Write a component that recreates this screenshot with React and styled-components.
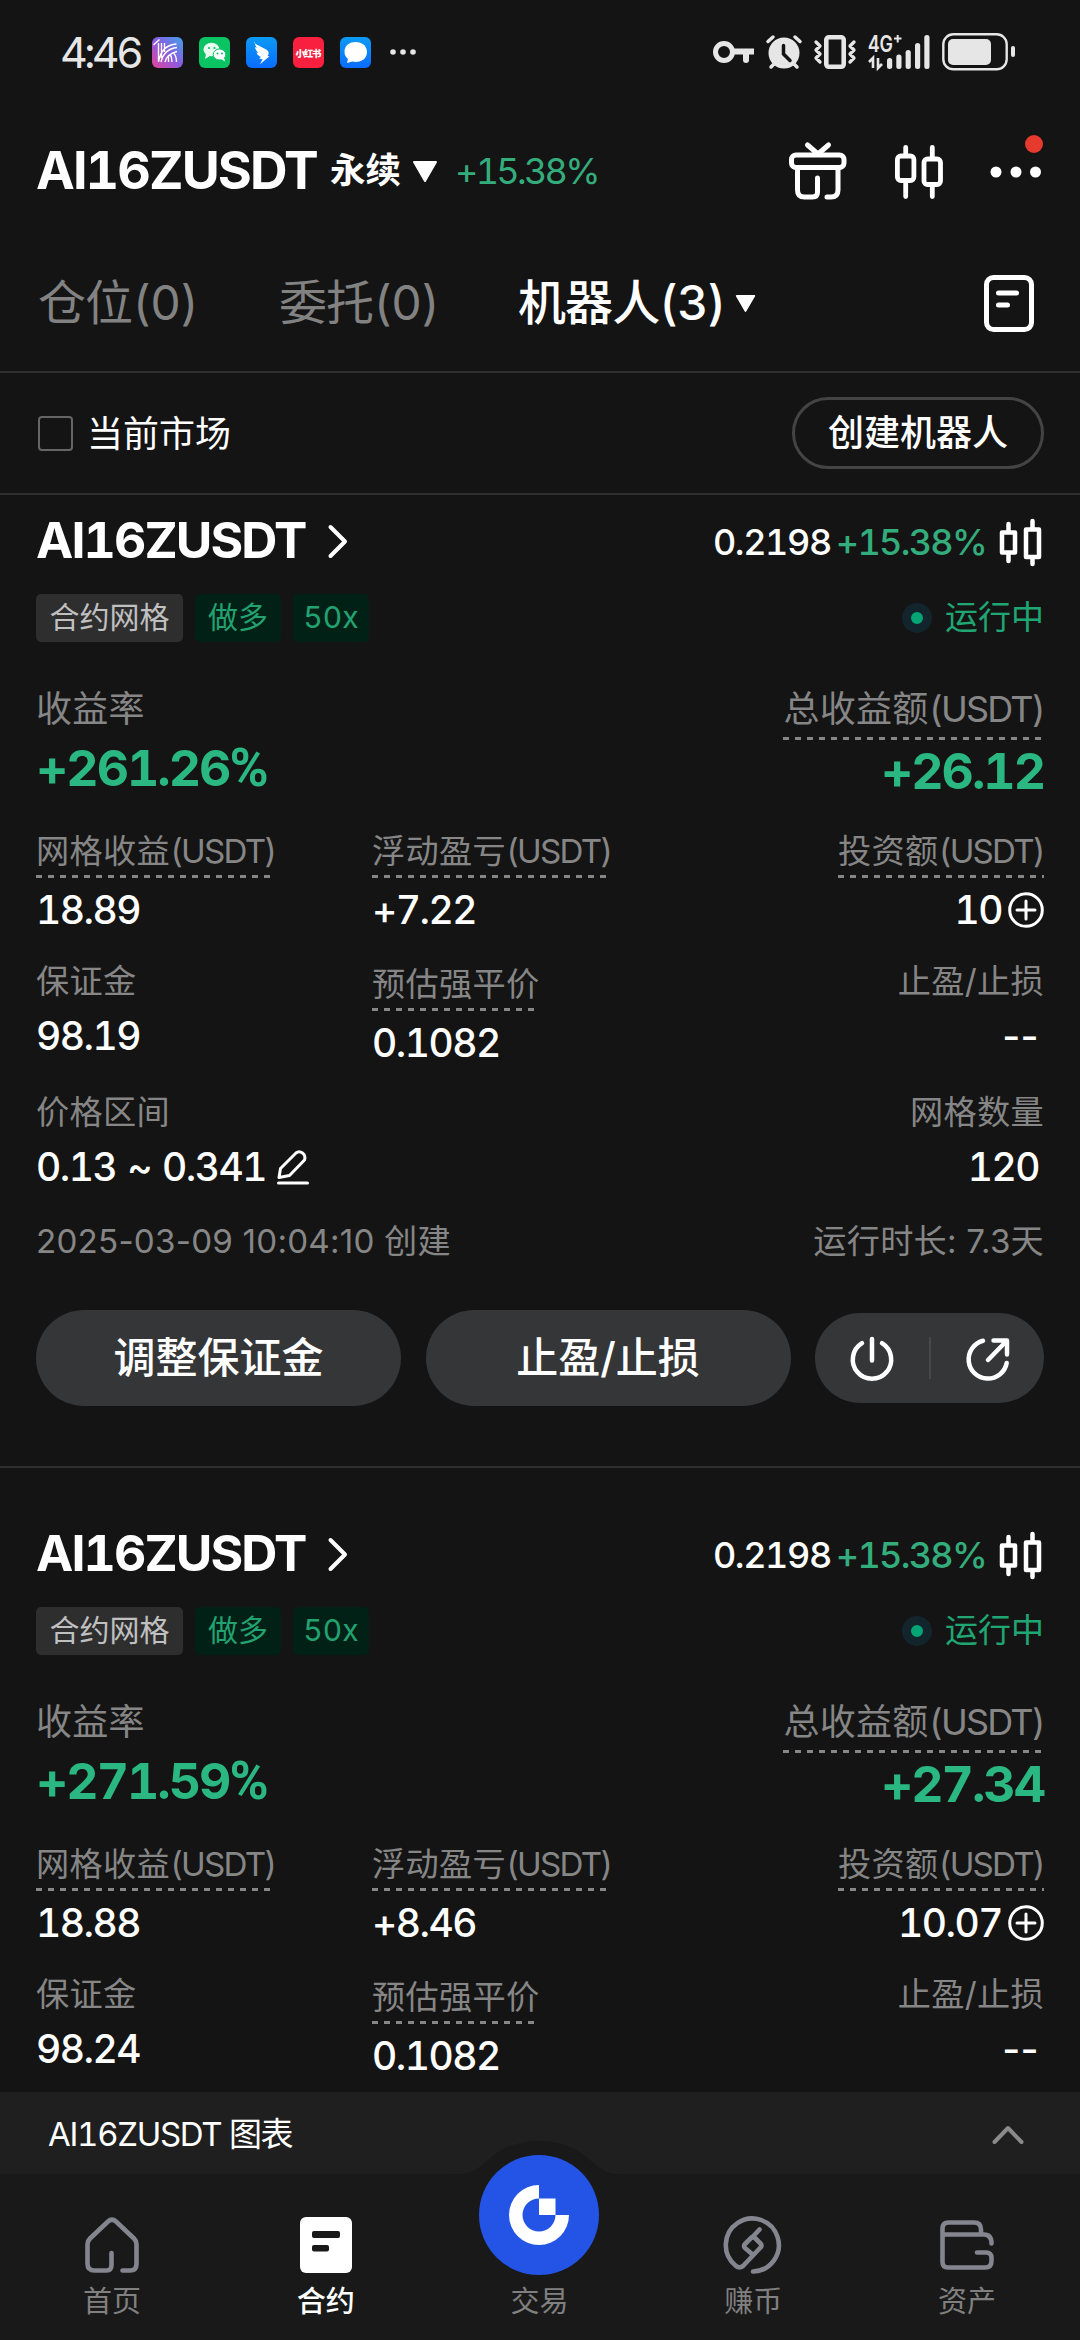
import React from 'react'
import styled, {createGlobalStyle, css} from 'styled-components'

const Black = '#141414'
const Green = '#2ab781'
const SoftGreen = '#34ad7c'
const Gray = '#868686'
const Line = '#2e2e30'
const NavGray = '#84858f'

const GlobalStyle = createGlobalStyle`
html, body {
  margin: 0;
  background: ${Black};
}
* {
  box-sizing: border-box;
}
svg {
  display: block;
  flex: none;
  overflow: visible;
}
`
const Screen = styled.div`
width: 1080px;
height: 2340px;
display: flex;
flex-direction: column;
overflow: hidden;
background: ${Black};
color: #fff;
font-family: 'Inter', 'Noto Sans CJK SC', sans-serif;
font-variant-numeric: tabular-nums;
line-height: 1.2;
white-space: nowrap;
`

/* status bar */
const StatusBar = styled.div`
height: 106px;
display: flex;
align-items: center;
justify-content: space-between;
padding: 0 65px 2px 60px;
color: #e6e6e6;
`
const StatusSide = styled.div`
display: flex;
align-items: center;
gap: ${props => props.gap}px;
`
const Clock = styled.div`
width: 76px;
font-size: 43px;
line-height: 50px;
letter-spacing: -3.8px;
`

/* header */
const Header = styled.div`
height: 130px;
display: flex;
align-items: center;
padding: 1px 36px 0;
`
const Pair = styled.div`
width: 294px;
font-size: 52px;
font-weight: 700;
letter-spacing: -1.9px;
`
const Perpetual = styled.div`
width: 82px;
font-size: 35.5px;
font-weight: 600;
`
const HeaderChange = styled.div`
margin-left: 17px;
flex: 1;
font-size: 36px;
color: ${SoftGreen};
letter-spacing: -2.7px;
`
const HeaderIcons = styled.div`
display: flex;
align-items: center;
gap: 47.5px;
`
const More = styled.div`
position: relative;
width: 52px;
margin-right: 2px;
`
const RedDot = styled.div`
position: absolute;
top: -31px;
right: -1px;
width: 18px;
height: 18px;
border-radius: 50%;
background: #e63a2e;
`

/* tabs */
const Tabs = styled.div`
height: 137px;
display: flex;
align-items: center;
padding: 0 46px 0 38px;
border-bottom: 2px solid ${Line};
`
const Tab = styled.div`
width: ${props => props.w}px;
padding-bottom: 2px;
font-size: 48px;
letter-spacing: -0.9px;
color: #828282;
${props => props.active && css`
color: #fff;
font-weight: 500;
`}
`
const Spacer = styled.div`
flex: 1;
`

/* filter row */
const Filter = styled.div`
height: 122px;
display: flex;
align-items: center;
justify-content: space-between;
padding: 0 36px 0 38px;
border-bottom: 2px solid ${Line};
`
const CheckLabel = styled.div`
display: flex;
align-items: center;
gap: 14px;
font-size: 36px;
line-height: 40px;
`
const CheckText = styled.span`
padding-top: 2px;
`
const CheckBox = styled.div`
width: 35px;
height: 35px;
border: 2px solid #666;
border-radius: 4px;
`
const CreateButton = styled.div`
width: 252px;
height: 72px;
display: flex;
align-items: center;
justify-content: center;
border: 3px solid #444;
border-radius: 36px;
padding-top: 2px;
font-size: 36px;
font-weight: 500;
`

/* robot cards */
const List = styled.div`
flex: 1;
min-height: 0;
overflow: hidden;
`
const Card = styled.div`
padding: ${props => props.first ? '10px' : '50px'} 36px 60px;
border-bottom: 2px solid ${Line};
`
const Row = styled.div`
display: flex;
align-items: center;
justify-content: space-between;
`
const TitleRow = styled(Row)`
height: 70px;
`
const Title = styled.div`
display: flex;
align-items: center;
font-size: 50px;
font-weight: 700;
letter-spacing: -1.9px;
`
const TitleText = styled.div`
width: 291px;
`
const Price = styled.div`
display: flex;
align-items: center;
font-size: 36px;
font-weight: 500;
letter-spacing: -1.4px;
padding: 5px 2px 0 0;
`
const Change = styled.span`
margin: 0 13px 0 5px;
letter-spacing: -1.7px;
color: ${SoftGreen};
`
const TagRow = styled(Row)`
height: 48px;
margin-top: 19px;
`
const Tags = styled.div`
display: flex;
gap: 12px;
`
const Tag = styled.div`
width: ${props => props.w}px;
height: 48px;
line-height: 47px;
text-align: center;
border-radius: 5px;
font-size: 30px;
background: ${props => props.green ? '#022116' : '#2e2e2f'};
color: ${props => props.green ? '#22a271' : '#c0c0c0'};
`
const Running = styled.div`
display: flex;
align-items: center;
gap: 13px;
font-size: 33px;
color: #1fa673;
`
const Pulse = styled.div`
width: 30px;
height: 30px;
border: 9px solid #13252c;
border-radius: 50%;
background: #05a474;
`
const Summary = styled.div`
height: 139px;
margin-top: 47px;
display: flex;
justify-content: space-between;
`
const Cell = styled.div`
display: flex;
flex-direction: column;
align-items: ${props => props.right ? 'flex-end' : 'flex-start'};
`
const Label = styled.div`
font-size: ${props => props.big ? 36 : 33.2}px;
line-height: 40px;
letter-spacing: 0.3px;
color: ${Gray};
margin-bottom: ${props => props.big ? 11 : 10}px;
${props => props.dashed && css`
margin-bottom: ${props.big ? 3 : 7}px;
padding-top: ${props.big ? 0 : 3}px;
&::after {
  content: '';
  display: block;
  height: 3px;
  margin-top: ${props.big ? 8 : 4}px;
  background: repeating-linear-gradient(90deg, ${Gray} 0 6px, transparent 6px 12px);
}
`}
`
const Unit = styled.span`
letter-spacing: -1.8px;
`
const BigValue = styled.div`
font-size: 50px;
line-height: 56px;
font-weight: 700;
letter-spacing: -2px;
color: ${Green};
`
const Percent = styled.span`
font-family: Roboto, sans-serif;
font-size: 53px;
line-height: 1;
`
const Grid = styled.div`
display: grid;
grid-template-columns: repeat(3, 336px);
grid-template-rows: 133px 131px 130px;
`
const Value = styled.div`
display: flex;
align-items: center;
font-size: 39px;
line-height: 50px;
font-weight: 500;
letter-spacing: -1.5px;
word-spacing: 2px;
padding-right: ${props => props.inset ? 5 : 0}px;
${props => props.empty && css`
font-variant-numeric: normal;
letter-spacing: 0.4px;
`}
`
const Gap = styled.div`
padding-left: ${props => props.w}px;
`
const Created = styled(Row)`
height: 40px;
font-size: 33.2px;
font-variant-numeric: normal;
letter-spacing: 0.2px;
color: ${Gray};
`
const Actions = styled(Row)`
margin-top: 48px;
`
const Action = styled.div`
width: 365px;
height: 96px;
border-radius: 48px;
background: #353638;
display: flex;
align-items: center;
justify-content: center;
font-size: 42px;
font-weight: 500;
`
const IconAction = styled(Action)`
width: 229px;
height: 90px;
gap: 35px;
`
const Split = styled.div`
width: 2px;
height: 42px;
background: #47484a;
`

/* bottom */
const ChartBar = styled.div`
height: 82px;
padding: 4px 56px 0 48px;
display: flex;
align-items: center;
justify-content: space-between;
background: #1f1f1f;
font-size: 33px;
letter-spacing: -1.3px;
`
const Nav = styled.div`
height: 166px;
padding: 0 6px 0 5px;
display: grid;
grid-template-columns: repeat(5, 1fr);
grid-template-rows: 166px;
background: #191919;
position: relative;
`
const Bump = styled.svg`
position: absolute;
left: 449px;
top: -33px;
`
const NavItem = styled.div`
position: relative;
display: flex;
flex-direction: column;
align-items: center;
justify-content: flex-end;
padding-bottom: 18px;
font-size: 29px;
line-height: 40px;
color: ${props => props.active ? '#fff' : '#808080'};
font-weight: ${props => props.active ? 500 : 400};
`
const NavIcon = styled.div`
height: 60px;
margin-bottom: 7px;
display: flex;
align-items: center;
`
const TradeIcon = styled.div`
margin-bottom: 7px;
`

const Candles = ({small}) => (
  small ? (
    <svg width="43" height="47" viewBox="0 0 43 47" fill="none" stroke="#fff" strokeWidth="4.5" strokeLinecap="round" strokeLinejoin="round">
      <path d="M3 13.500h13v20h-13zM27 10.500h13v27.500h-13zM9.500 5v8M9.500 34v8M33.500 2v8M33.500 38v7" />
    </svg>
  ) : (
    <svg width="48" height="54" viewBox="0 0 48 54" fill="none" stroke="#fff" strokeWidth="4.800" strokeLinecap="round">
      <rect x="2.400" y="11" width="16.500" height="24.500" rx="3.500" />
      <rect x="29" y="14" width="16.500" height="25.500" rx="3.500" />
      <path d="M10.700 2.500v8M10.700 36v15.500M37.300 2.500v11M37.300 40v11.500" />
    </svg>
  )
)

const Triangle = ({w, h}) => (
  <svg width={w} height={h} viewBox="0 0 26 21">
    <path d="M2 1h22L13 20z" fill="#fff" stroke="#fff" strokeWidth="2" strokeLinejoin="round" />
  </svg>
)

const AppIcons = () => (
  <svg width="266" height="31" viewBox="0 0 266 31">
    <defs>
      <linearGradient id="k" x1="0" y1="1" x2="1" y2="0">
        <stop offset="0" stopColor="#e8439a" />
        <stop offset=".5" stopColor="#8a5be0" />
        <stop offset="1" stopColor="#3fa5ea" />
      </linearGradient>
      <linearGradient id="b" x1="0" y1="0" x2="0" y2="1">
        <stop offset="0" stopColor="#0b9bf5" />
        <stop offset="1" stopColor="#0a6cff" />
      </linearGradient>
    </defs>
    <rect width="31" height="31" rx="6" fill="url(#k)" />
    <g fill="none" stroke="#fff" strokeWidth="1.400">
      <path d="M6.500 6v19M9.500 6v15M12.500 6v9M6.500 25q3-17 18-18M9 25q3-13 16-14.500M13 25q2-8 12-10.500M16.500 25q0-6 0-6M20 25q0-5-2-8M24.500 25q0-6-3-9" />
      <path d="M1.500 8l6-5.500" />
    </g>
    <rect x="47" width="31" height="31" rx="6" fill="#0ac463" />
    <ellipse cx="59.500" cy="12.500" rx="8" ry="6.800" fill="#e9fbef" />
    <path d="M54 17l-1 5 5-3z" fill="#e9fbef" />
    <ellipse cx="67.500" cy="17.500" rx="6.300" ry="5.500" fill="#fff" stroke="#0ac463" strokeWidth="1" />
    <path d="M69 22l4 2.500-1-4z" fill="#fff" />
    <g fill="#0ac463">
      <circle cx="57" cy="11" r="1.100" />
      <circle cx="62.500" cy="11" r="1.100" />
      <circle cx="65.500" cy="16.500" r="1" />
      <circle cx="70" cy="16.500" r="1" />
    </g>
    <rect x="94" width="31" height="31" rx="6" fill="url(#b)" />
    <path d="M102 5c2 4 13 6 14.500 10 .6 2-.5 3-1 4l2 .2-9.500 8 2.500-5-3.500-.6 2-1.500c-2-.8-4-2.500-4.500-4.500l2 .5c-2-2-3.500-4-3.500-6l2 1c-1.500-2-2.500-4-2-6z" fill="#fff" />
    <rect x="141" width="31" height="31" rx="6" fill="#f8203e" />
    <text x="143.500" y="19.500" fontSize="9.500" fontWeight="900" fill="#fff" textLength="26" fontFamily="'Noto Sans CJK SC', sans-serif">小红书</text>
    <rect x="188" width="31" height="31" rx="6" fill="url(#b)" />
    <path d="M203.500 5c7 0 11.500 4.300 11.500 10s-4.500 10-11.500 10c-1.200 0-2-.1-3-.4L195 26l1-4c-2-1.600-3.500-4-3.500-7 0-5.700 4-10 11-10z" fill="#fff" />
    <g fill="#e6e6e6">
      <circle cx="241" cy="15" r="2.800" />
      <circle cx="251" cy="15" r="2.800" />
      <circle cx="261" cy="15" r="2.800" />
    </g>
  </svg>
)

const KeyIcon = () => (
  <svg width="41" height="24" viewBox="0 0 41 24" fill="none" stroke="#e6e6e6">
    <circle cx="11" cy="12" r="8.500" strokeWidth="5" />
    <path d="M20 11.500h21" strokeWidth="6" />
    <path d="M33 12v8" strokeWidth="6" strokeLinecap="round" />
  </svg>
)

const AlarmIcon = () => (
  <svg width="36" height="34" viewBox="0 0 36 34" fill="none" strokeLinecap="round">
    <circle cx="18" cy="18" r="15.500" fill="#e6e6e6" />
    <path d="M2 6.500L7 2M34 6.500L29 2M8 29l-3 3M28 29l3 3" stroke="#e6e6e6" strokeWidth="3.500" />
    <path d="M17.500 10.500v8.500l6.500 6.500" stroke={Black} strokeWidth="3.500" />
  </svg>
)

const VibrateIcon = () => (
  <svg width="42" height="34" viewBox="0 0 42 34" fill="none" stroke="#e6e6e6">
    <rect x="12.300" y="2.300" width="17.400" height="29.500" rx="2.500" strokeWidth="4.600" />
    <path d="M2 7l4 4-4 4 4 4-4 4 4 4M40 7l-4 4 4 4-4 4 4 4-4 4" strokeWidth="3.300" strokeLinecap="round" strokeLinejoin="round" />
  </svg>
)

const SignalIcon = () => (
  <svg width="62" height="46" viewBox="0 -5 62 46" fill="#e6e6e6">
    <text x="0" y="17.500" fontSize="23" fontWeight="600" textLength="25" lengthAdjust="spacingAndGlyphs" fontFamily="Inter, sans-serif">4G</text>
    <path d="M26 4.500h7.500M29.700 1v7.500" stroke="#e6e6e6" strokeWidth="2" />
    <path d="M1 28l4-4v10M10 24v10l4-4" fill="none" stroke="#e6e6e6" strokeWidth="2.600" />
    <rect x="19" y="24" width="5.200" height="11" rx="2.500" />
    <rect x="28.300" y="20.500" width="5.200" height="14.500" rx="2.500" />
    <rect x="37.600" y="16" width="5.200" height="19" rx="2.500" />
    <rect x="47" y="9" width="5.200" height="26" rx="2.500" />
    <rect x="56.300" y="1" width="5.200" height="34" rx="2.500" />
  </svg>
)

const BatteryIcon = () => (
  <svg width="73" height="38" viewBox="0 0 73 38">
    <rect x="1.300" y="1.300" width="63.400" height="35" rx="10" fill="none" stroke="#e6e6e6" strokeWidth="2.400" />
    <rect x="6" y="6" width="43" height="26" rx="5" fill="#e6e6e6" />
    <rect x="69" y="13" width="4" height="11" rx="2" fill="#e6e6e6" />
  </svg>
)

const GiftIcon = () => (
  <svg width="58" height="60" viewBox="0 0 58 60" fill="none" stroke="#fff" strokeWidth="5" strokeLinecap="round" strokeLinejoin="round">
    <rect x="2.500" y="13" width="52.500" height="12.500" rx="4.500" />
    <path d="M18.500 3l10.500 9 10.500-9" />
    <path d="M8.500 26v22q0 7 7 7h8q5 0 5-5V36M49 26v22q0 7-7 7h-4" />
  </svg>
)

const DocIcon = () => (
  <svg width="50" height="57" viewBox="0 0 50 57" fill="none" stroke="#fff" strokeWidth="5" strokeLinecap="round">
    <rect x="2.500" y="2.500" width="45" height="52" rx="7" />
    <path d="M14.500 18h18M14.500 30h9" />
  </svg>
)

const PencilIcon = () => (
  <svg width="32" height="35" viewBox="0 0 32 35" fill="none" stroke="#fff" strokeWidth="3" strokeLinecap="round" strokeLinejoin="round">
    <path d="M2 27.500L3.500 18.500 19 3q3-2.500 6.500 0t2 7L12.500 25.500z" />
    <path d="M1.500 33h29" />
  </svg>
)

const PlusIcon = () => (
  <svg width="36" height="36" viewBox="0 0 36 36" fill="none" stroke="#fff" strokeWidth="3">
    <circle cx="18" cy="18" r="16.300" />
    <path d="M9 18h18M18 9v18" strokeLinecap="round" />
  </svg>
)

const PowerIcon = () => (
  <svg width="44" height="44" viewBox="0 0 44 44" fill="none" stroke="#fff" strokeWidth="4.500" strokeLinecap="round">
    <path d="M12 7.200a19.200 19.200 0 1 0 20 0M22 3v21.500" />
  </svg>
)

const ShareIcon = () => (
  <svg width="44" height="44" viewBox="0 0 44 44" fill="none" stroke="#fff" strokeWidth="4.500" strokeLinecap="round" strokeLinejoin="round">
    <path d="M17 4.800A19.200 19.200 0 1 0 40.700 27M27.500 4.500h13.500v14M40.500 5L22 24" />
  </svg>
)

const NavGlyph = styled.svg.attrs({fill: 'none', strokeWidth: 4.6, strokeLinecap: 'round', strokeLinejoin: 'round'})`
stroke: ${NavGray};
`

const NAV = [
  {label: '首页', icon: (
    <NavGlyph width="54" height="56" viewBox="0 0 54 56">
      <path d="M26.500 42v-6M26.500 36v12q0 5.500-5 5.500h-12q-7 0-7-7V27q0-3 2.500-5.500L23 4.500q4-3.500 8 0l18 17q2.500 2.500 2.500 5.500v20q0 6.500-6.500 6.500h-7.500" />
    </NavGlyph>
  )},
  {label: '合约', active: true, icon: (
    <svg width="52" height="56" viewBox="0 0 52 56">
      <rect width="52" height="56" rx="6" fill="#fff" />
      <rect x="12" y="14" width="28" height="7" rx="2" fill="#191919" />
      <rect x="12" y="28" width="17" height="6.500" rx="2" fill="#191919" />
    </svg>
  )},
  {label: '交易', trade: true, icon: (
    <svg width="120" height="120" viewBox="0 0 120 120">
      <circle cx="60" cy="60" r="60" fill="#2354e6" />
      <path d="M60 30a30 30 0 1 0 30 30h-13.500a16.500 16.500 0 1 1-16.500-16.500z" fill="#fff" />
      <rect x="60" y="43.500" width="16.500" height="16.500" fill="#fff" />
    </svg>
  )},
  {label: '赚币', icon: (
    <NavGlyph width="58" height="58" viewBox="0 0 58 58">
      <path d="M29 55.500A26.500 26.500 0 1 0 11.500 49.500q4 4 8 0L36.500 31.500q2-2 0-4l-6-6q-1.500-1.500-3 0l-6.500 6.500q-2 2 0 4L28 38M28 21.500l7.500-8" />
    </NavGlyph>
  )},
  {label: '资产', icon: (
    <NavGlyph width="54" height="50" viewBox="0 0 54 50">
      <path d="M2.500 14.500V8.500q0-6 6-6H34q7 0 7 7v4.500M2.500 14.500H44q7.500 0 7.500 9M2.500 14.500V42q0 5.500 5.500 5.500H45q6.500 0 6.500-6.500v-3q0-5.500-5.500-5.500H37" />
    </NavGlyph>
  )}
]

const ROBOTS = [
  {
    rate: '+261.26',
    profit: '+26.12',
    rows: [
      ['18.89', '+7.22', '10'],
      ['98.19', '0.1082', '--'],
      ['0.13 ~ 0.341', null, '120']
    ],
    created: '2025-03-09 10:04:10 创建',
    duration: '运行时长: 7.3天'
  },
  {
    rate: '+271.59',
    profit: '+27.34',
    rows: [
      ['18.88', '+8.46', '10.07'],
      ['98.24', '0.1082', '--']
    ]
  }
]

const LABELS = [
  [{text: '网格收益', usdt: true}, {text: '浮动盈亏', usdt: true}, {text: '投资额', usdt: true}],
  [{text: '保证金'}, {text: '预估强平价', dashed: true}, {text: '止盈/止损'}],
  [{text: '价格区间'}, null, {text: '网格数量'}]
]

const Stat = ({row, col, value}) => {
  if (value === null) return <div />
  const {text, usdt, dashed} = LABELS[row][col]
  const plus = row === 0 && col === 2
  const pencil = row === 2 && col === 0
  return (
    <Cell right={col === 2}>
      <Label dashed={usdt || dashed}>{text}{usdt && <Unit>(USDT)</Unit>}</Label>
      <Value inset={col === 2 && !plus} empty={value === '--'}>
        {value}
        {plus && <Gap w={6}><PlusIcon /></Gap>}
        {pencil && <Gap w={11}><PencilIcon /></Gap>}
      </Value>
    </Cell>
  )
}

const Robot = ({robot, first}) => (
  <Card first={first}>
    <TitleRow>
      <Title>
        <TitleText>AI16ZUSDT</TitleText>
        <svg width="22" height="34" viewBox="0 0 22 34" fill="none" stroke="#fff" strokeWidth="4" strokeLinecap="round" strokeLinejoin="round">
          <path d="M3.500 4l14.500 14.500L3.500 33" />
        </svg>
      </Title>
      <Price>
        0.2198<Change>+15.38%</Change>
        <Candles small />
      </Price>
    </TitleRow>
    <TagRow>
      <Tags>
        <Tag w={147}>合约网格</Tag>
        <Tag w={86} green>做多</Tag>
        <Tag w={76} green>50x</Tag>
      </Tags>
      <Running><Pulse />运行中</Running>
    </TagRow>
    <Summary>
      <Cell>
        <Label big>收益率</Label>
        <BigValue>{robot.rate}<Percent>%</Percent></BigValue>
      </Cell>
      <Cell right>
        <Label big dashed>总收益额<Unit>(USDT)</Unit></Label>
        <BigValue>{robot.profit}</BigValue>
      </Cell>
    </Summary>
    <Grid>
      {robot.rows.map((values, row) => values.map((value, col) => (
        <Stat key={`${row}-${col}`} row={row} col={col} value={value} />
      )))}
    </Grid>
    {robot.created && (
      <>
        <Created>
          <span>{robot.created}</span>
          <span>{robot.duration}</span>
        </Created>
        <Actions>
          <Action>调整保证金</Action>
          <Action>止盈/止损</Action>
          <IconAction>
            <PowerIcon />
            <Split />
            <ShareIcon />
          </IconAction>
        </Actions>
      </>
    )}
  </Card>
)

export default class App extends React.Component {
  render() {
    return (
      <Screen>
        <GlobalStyle />
        <StatusBar>
          <StatusSide gap={16}>
            <Clock>4:46</Clock>
            <AppIcons />
          </StatusSide>
          <StatusSide gap={12}>
            <KeyIcon />
            <AlarmIcon />
            <VibrateIcon />
            <SignalIcon />
            <BatteryIcon />
          </StatusSide>
        </StatusBar>
        <Header>
          <Pair>AI16ZUSDT</Pair>
          <Perpetual>永续</Perpetual>
          <Triangle w={26} h={21} />
          <HeaderChange>+15.38%</HeaderChange>
          <HeaderIcons>
            <GiftIcon />
            <Candles />
            <More>
              <svg width="52" height="12" viewBox="0 0 52 12" fill="#fff">
                <circle cx="6" cy="6" r="5.500" />
                <circle cx="26" cy="6" r="5.500" />
                <circle cx="45.500" cy="6" r="5.500" />
              </svg>
              <RedDot />
            </More>
          </HeaderIcons>
        </Header>
        <Tabs>
          <Tab w={241}>仓位(0)</Tab>
          <Tab w={239}>委托(0)</Tab>
          <Tab w={217} active>机器人(3)</Tab>
          <Triangle w={21} h={17} />
          <Spacer />
          <DocIcon />
        </Tabs>
        <Filter>
          <CheckLabel><CheckBox /><CheckText>当前市场</CheckText></CheckLabel>
          <CreateButton>创建机器人</CreateButton>
        </Filter>
        <List>
          {ROBOTS.map((robot, i) => <Robot key={robot.rate} robot={robot} first={i === 0} />)}
        </List>
        <ChartBar>
          <span>AI16ZUSDT 图表</span>
          <svg width="32" height="20" viewBox="0 0 32 20" fill="none" stroke="#8a8a8a" strokeWidth="4" strokeLinecap="round" strokeLinejoin="round">
            <path d="M2.500 17L16 3l13.500 14" />
          </svg>
        </ChartBar>
        <Nav>
          <Bump width="180" height="34" viewBox="0 0 180 34">
            <path d="M0 34C28 34 32 24 45 14C58 4 74 0 90 0S122 4 135 14C148 24 152 34 180 34z" fill="#191919" />
          </Bump>
          {NAV.map(item => (
            <NavItem key={item.label} active={item.active}>
              {item.trade ? <TradeIcon>{item.icon}</TradeIcon> : <NavIcon>{item.icon}</NavIcon>}
              {item.label}
            </NavItem>
          ))}
        </Nav>
      </Screen>
    )
  }
}
